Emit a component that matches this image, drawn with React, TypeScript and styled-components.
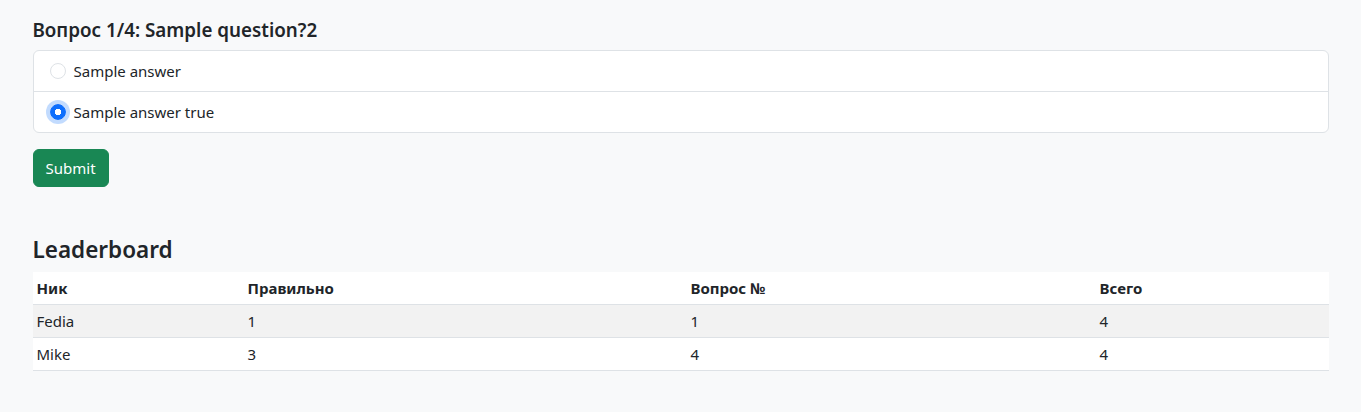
import React, { useState } from "react";
import styled, { createGlobalStyle } from "styled-components";

const GlobalStyle = createGlobalStyle`
  * { box-sizing: border-box; }
  html, body { margin: 0; padding: 0; }
  body {
    background: #f8f9fa;
    color: #212529;
    font-family: "Noto Sans", "Open Sans", sans-serif;
    font-size: 15px;
    line-height: 1.5;
  }
`;

const Container = styled.div`
  max-width: 1320px;
  margin: 0 auto;
  padding: 18px 12px 24px;
`;

const QuestionTitle = styled.h5`
  margin: 0 0 8px;
  font-size: 18.8px;
  font-weight: 600;
  line-height: 24px;
`;

const ListGroup = styled.div`
  display: flex;
  flex-direction: column;
  background: #fff;
  border: 1px solid #dee2e6;
  border-radius: 6px;
  margin-bottom: 16px;
`;

const ListItem = styled.label`
  display: flex;
  align-items: center;
  gap: 8px;
  padding: 8px 16px;
  line-height: 24px;
  cursor: pointer;
  & + & {
    border-top: 1px solid #dee2e6;
  }
`;

const Radio = styled.input`
  appearance: none;
  width: 16px;
  height: 16px;
  margin: 0;
  border-radius: 50%;
  border: 1px solid #dee2e6;
  background: #fff;
  flex-shrink: 0;
  &:checked {
    border-color: #0d6efd;
    background: radial-gradient(circle, #fff 0 3px, #0d6efd 3.5px);
    box-shadow: 0 0 0 4px rgba(13, 110, 253, 0.25);
  }
`;

const SubmitButton = styled.button`
  font-family: inherit;
  font-size: 15px;
  line-height: 24px;
  padding: 6px 12px;
  color: #fff;
  background: #198754;
  border: 1px solid #198754;
  border-radius: 6px;
  cursor: pointer;
`;

const Section = styled.section`
  margin-top: 48px;
`;

const BoardTitle = styled.h4`
  margin: 0 0 8px;
  padding-top: 2px;
  font-size: 22.5px;
  font-weight: 600;
  line-height: 26.8px;
`;

const Table = styled.table`
  width: 100%;
  border-collapse: collapse;
  background: #fff;
  table-layout: fixed;
`;

const Th = styled.th<{ $w?: number }>`
  text-align: left;
  font-weight: 700;
  padding: 4px;
  line-height: 24px;
  border-bottom: 1px solid #dee2e6;
  ${(p) => (p.$w ? `width: ${p.$w}px;` : "")}
`;

const Row = styled.tr<{ $striped?: boolean }>`
  background: ${(p) => (p.$striped ? "#f2f2f2" : "#fff")};
`;

const Td = styled.td`
  padding: 4px;
  line-height: 24px;
  border-bottom: 1px solid #dee2e6;
`;

const answers = ["Sample answer", "Sample answer true"];
const rows = [
  { nick: "Fedia", correct: 1, q: 1, total: 4 },
  { nick: "Mike", correct: 3, q: 4, total: 4 },
];

export default function App() {
  const [selected, setSelected] = useState(1);
  return (
    <>
      <GlobalStyle />
      <Container>
        <QuestionTitle>Вопрос 1/4: Sample question?2</QuestionTitle>
        <ListGroup>
          {answers.map((a, i) => (
            <ListItem key={a}>
              <Radio
                type="radio"
                name="answer"
                checked={selected === i}
                onChange={() => setSelected(i)}
              />
              {a}
            </ListItem>
          ))}
        </ListGroup>
        <SubmitButton>Submit</SubmitButton>
        <Section>
          <BoardTitle>Leaderboard</BoardTitle>
          <Table>
            <thead>
              <tr>
                <Th $w={211}>Ник</Th>
                <Th $w={443}>Правильно</Th>
                <Th $w={409}>Вопрос №</Th>
                <Th>Всего</Th>
              </tr>
            </thead>
            <tbody>
              {rows.map((r, i) => (
                <Row key={r.nick} $striped={i % 2 === 0}>
                  <Td>{r.nick}</Td>
                  <Td>{r.correct}</Td>
                  <Td>{r.q}</Td>
                  <Td>{r.total}</Td>
                </Row>
              ))}
            </tbody>
          </Table>
        </Section>
      </Container>
    </>
  );
}
